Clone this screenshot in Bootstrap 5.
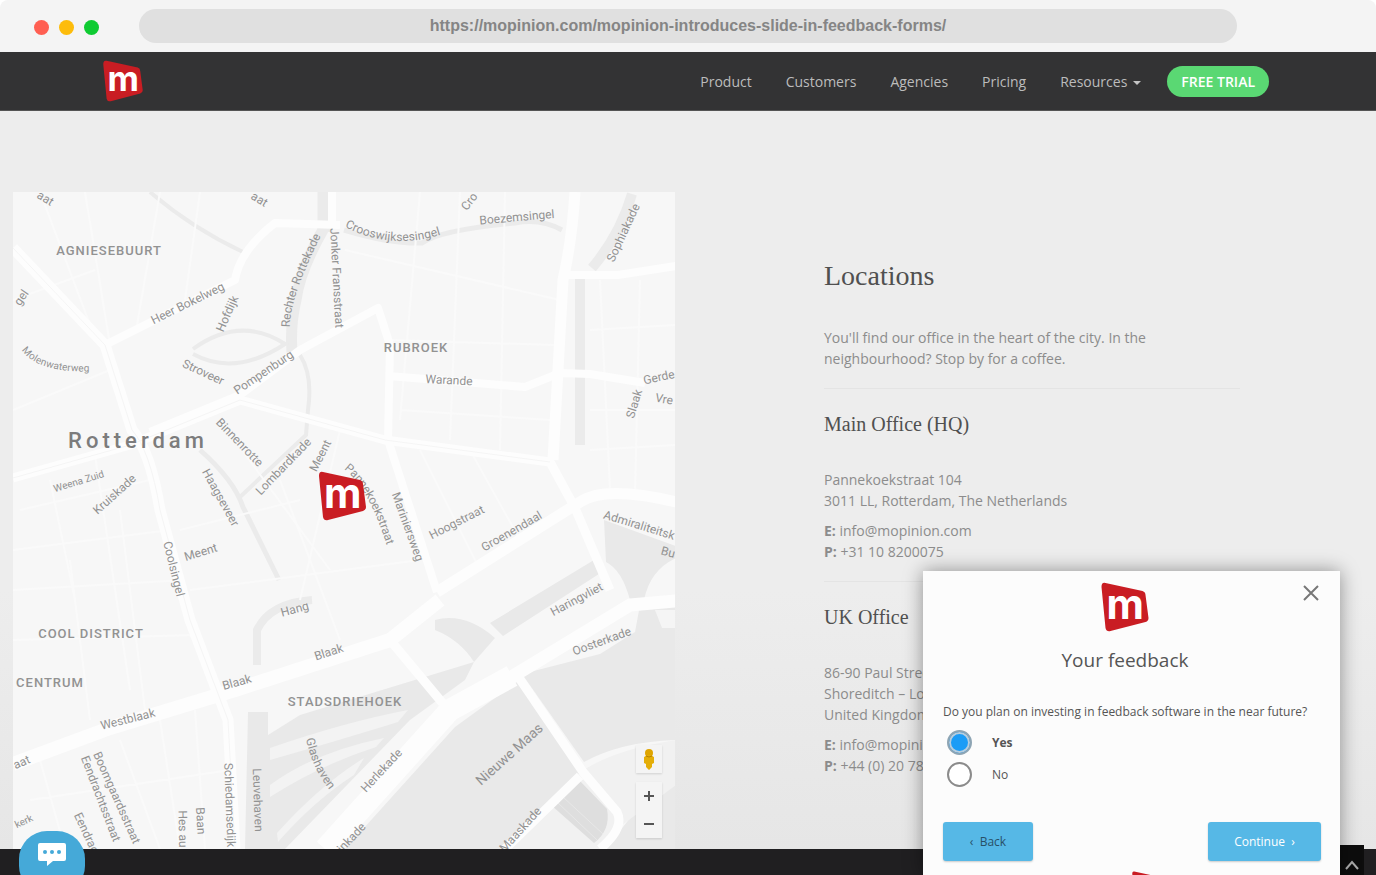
<!DOCTYPE html>
<html lang="en">
<head>
<meta charset="utf-8">
<meta name="viewport" content="width=device-width, initial-scale=1">
<title>Mopinion – Locations</title>
<link href="https://cdn.jsdelivr.net/npm/bootstrap@5.3.0/dist/css/bootstrap.min.css" rel="stylesheet">
<style>
body{font-family:"Open Sans",sans-serif;font-size:14px;line-height:21px;color:#8c8c8c;background:#fff;overflow-x:hidden}
a{color:inherit;text-decoration:none}
.chrome{background:#f4f4f4;height:52px;padding:0 139px 0 34px;border-radius:8px 8px 0 0}
.dot{width:15px;height:15px;border-radius:50%}
.dot-close{background:#ff5f52}.dot-min{background:#fdbc0b}.dot-max{background:#0fcb32}
.dots{gap:10px;width:105px;padding-top:3px}
.address{height:34px;border:0;border-radius:17px;background:#e0e0e0;color:#858585;font:bold 16px "Liberation Sans",sans-serif;text-align:center;min-width:0}
.topnav{background:#333334;min-height:59px;padding:0 107px 0 103px;border-bottom:1px solid #555}
.topnav .nav-link{color:#bcbcbc;padding:0}
.links{gap:34px}
.trial{background:#5ad873;color:#fff;font-weight:600;line-height:19px;border-radius:16px;padding:6px 14px;margin-left:-8px}
.caret{display:inline-block;border:4px solid transparent;border-top-color:#c4c4c4;border-bottom:0;margin-left:6px;vertical-align:2px}
.page-body{background:linear-gradient(#ededed 0 65%,#e6e6e6);padding-top:81px}
.map-col{padding:0 13px}
.city-map{display:block;width:100%;height:657px;background:#f7f7f7}
.city-map text{font-family:Roboto,sans-serif;font-size:12px;fill:#929292;text-anchor:middle;dominant-baseline:middle}
.city-map .area{font-size:13px;font-weight:500;letter-spacing:1px}
.city-map .town{font-size:22px;font-weight:500;letter-spacing:4px;fill:#7c7c7c}
.city-map .along{text-anchor:start}
.city-map .river{font-size:14px}
.city-map .tiny{font-size:10px}
.logo-m,.city-map .logo-m{font:bold 41px Inter,sans-serif;fill:#fff;text-anchor:start;dominant-baseline:auto}
.map-tools{right:13px;bottom:11px;gap:9px}
.map-tools button{display:flex;align-items:center;justify-content:center;width:26px;height:28px;padding:0;border:0;background:#f4f4f4}
.tool-group{box-shadow:0 1px 2px #0002}
.info-col{padding:66px 136px 0}
h1,h2{font-family:"Liberation Serif",serif;color:#505050;margin:0}
h1{font-size:28px;line-height:36px;margin-bottom:33px}
h2{font-size:20px;line-height:30px;margin-bottom:30px}
.info-col p{margin-bottom:9px}
.info-col hr{margin:19px 0 20px;color:#ccc}
.site-foot{background:#201f21;height:26px}
.slide-in{right:36px;bottom:0;width:417px;height:304px;overflow:hidden;background:#fcfcfc;padding:11px 19px 0 20px;color:#555}
.shade{right:36px;bottom:0;width:417px;height:304px;box-shadow:0 0 18px #0006}
.slide-in h3{font-size:19px;font-weight:400;line-height:28px;margin:14px 0 29px;color:#555}
.panel-head{padding-right:14px}
.panel-foot{padding:10px 0 0 24px}
.question{font-size:12px;line-height:18px}
.closer{right:20px;top:13px;padding:0;border:0;background:none;line-height:0}
.option{gap:20px;height:32px;font-size:12px}
.options{padding-top:5px}
.option input{appearance:none;width:25px;height:25px;border:2px solid #8b8b8b;border-radius:50%;margin:0 0 0 4px;background:#fff}
.option input:checked{background:#1b9cf6;border-color:#8ea5b4;box-shadow:inset 0 0 0 2px #b8cddd}
.step{background:#56b8e6;border:0;border-radius:3px;height:39px;font-size:12px;box-shadow:0 1px 2px #0003}
.step-back{width:90px;color:#295066}
.step-next{width:113px;color:#fff}
.chat{left:19px;bottom:-19px;width:66px;height:63px;border:0;border-radius:28px;background:#45a9d8;padding:0 0 15px}
.totop{right:12px;bottom:0;width:24px;height:30px;border:0;background:#0d0d0d;padding:6px 0 0}
</style>
</head>
<body>
<svg width="0" height="0" class="position-absolute" aria-hidden="true"><defs>
<g id="logo"><path d="M4 1 41 9Q44 10 44 13L47 36Q47 39 44 40L9 49Q5 50 4 46L0 5Q0 0 4 1Z" fill="#c91d23"/><text class="logo-m" x="5" y="37">m</text></g>
</defs></svg>

<header class="chrome d-flex align-items-center">
  <div class="dots d-flex flex-shrink-0"><span class="dot dot-close"></span><span class="dot dot-min"></span><span class="dot dot-max"></span></div>
  <input class="address flex-grow-1" type="text" aria-label="Address" value="https://mopinion.com/mopinion-introduces-slide-in-feedback-forms/">
</header>

<nav class="topnav d-flex align-items-center justify-content-between">
  <a href="#" aria-label="Mopinion"><svg width="40" height="42" viewBox="0 0 47 50"><use href="#logo"/></svg></a>
  <div class="links d-flex align-items-center">
    <a class="nav-link" href="#">Product</a><a class="nav-link" href="#">Customers</a><a class="nav-link" href="#">Agencies</a><a class="nav-link" href="#">Pricing</a><a class="nav-link" href="#">Resources<span class="caret"></span></a><a class="trial" href="#">FREE TRIAL</a>
  </div>
</nav>

<main class="page-body">
<div class="row g-0">
  <div class="col-6 map-col"><div class="position-relative">
  <svg class="city-map" viewBox="13 192 662 657" preserveAspectRatio="xMidYMid slice" role="img" aria-label="Map of Rotterdam">
    <!-- water -->
    <g fill="#e9e9e9">
      <path d="M517 682 455 727 345 849H500L582 772ZM522 674 600 654 635 632 640 605 676 605V740Q620 742 584 762ZM676 785 640 806 605 849H676Z"/>
      <path d="M604 520 676 546V558Q650 570 644 600L630 600Q622 570 606 562Z"/>
      <path d="M490 623 594 560 602 572 503 636ZM435 620Q465 612 495 638L474 662Q460 640 435 630Z"/>
      <path d="M248 712H268V735L300 715 474 662 465 680 410 720 285 849 245 849Z"/>
    </g>
    <path d="M655 610H676V628H662Z" fill="#f5f5f5"/>
    <g fill="#f3f3f3"><path d="M270 748Q345 722 408 710L398 722Q340 740 270 760ZM270 785Q315 752 384 738L376 747Q320 765 270 797ZM277 833Q320 785 364 758L354 775Q315 800 278 842Z"/></g>
    <path d="M503 849 578 774Q610 750 676 740V785L622 825 600 849Z" fill="#f1f1f1"/>
    <path d="M551 805 578 779 607 809Q611 830 594 843Z" fill="#dedede"/>
    <path d="m557 802 40 38M563 797l40 37" stroke="#e8e8e8" fill="none"/>
    <g fill="none" stroke="#ebebeb">
      <path stroke-width="15" d="M325 192V232"/><path stroke-width="11" d="M324 228Q300 270 296 300Q290 325 292 352"/>
      <path stroke-width="4" d="M300 355Q313 375 308 410L306 435 240 497M193 349Q240 315 285 344Q235 377 193 354M150 192Q192 228 243 252"/>
      <path stroke-width="5" d="M344 230Q390 244 422 243 440 230 515 223 540 218 562 230M200 450Q234 480 243 507L279 580"/>
      <path stroke-width="10" d="M580 279V445M632 194Q620 235 592 268"/>
      <path stroke-width="8" d="M257 665V630Q270 603 312 600"/>
    </g>
    <!-- minor streets -->
    <g fill="none" stroke="#fafafa" stroke-width="2">
      <path d="M13 300 95 270M40 192 92 330M85 192 110 345M160 192 137 325M200 192 185 300M13 410 110 370M20 510 150 480M50 480 75 600M95 455 130 690M13 550 170 530M13 590 185 580M13 640 195 635M70 560 90 720M120 510 145 710M220 420 330 570M180 530 300 500M190 590 420 560M280 480 340 640M340 430 300 600M345 250 560 300M420 192 400 420M460 192 450 440M505 192 500 450M390 340 555 345M400 410 550 420M420 450 480 570M470 450 520 540M600 280 610 490M640 280 635 495M590 330 676 325M590 410 676 410M590 450 676 445M40 760 65 849M120 740 160 849M160 720 180 849M195 710 205 849M30 800 230 770"/>
    </g>
    <!-- main roads -->
    <g fill="none" stroke="#fdfdfd" stroke-linejoin="round">
      <path stroke-width="11" d="M13 248 105 345 132 430Q150 450 160 510L190 620 228 720 235 849"/>
      <path stroke-width="9" d="M13 478 130 445 240 400 385 440 550 462 575 508 610 590"/>
      <path stroke-width="8" d="M105 345 235 280Q240 250 275 223L340 225M332 192V228M150 432 240 395 300 350 378 308 390 345 388 440 437 592M388 376 525 387 560 373 590 374 645 383M562 275 618 275 676 266"/>
      <path stroke-width="11" d="M575 192Q572 240 563 280L553 460M437 592 580 502Q605 485 676 502"/>
      <path stroke-width="14" d="M13 764 110 728 235 690 390 640 440 600"/>
      <path stroke-width="9" d="M390 640 445 706M505 849 580 776M515 672 583 772 617 812Q625 828 600 849"/>
      <path stroke-width="22" d="M512 676 450 710 325 849"/><path stroke-width="13" d="M676 601 630 605 510 678"/>
    </g>
    <path fill="none" stroke="#f5f5f5" d="M13 248 105 345 132 430Q150 450 160 510L190 620 228 720 235 849M13 478 130 445 240 400 385 440 550 462"/>
    <!-- place names -->
    <text class="area" x="109" y="252">AGNIESEBUURT</text><text class="area" x="416" y="349">RUBROEK</text><text class="area" x="91" y="635">COOL DISTRICT</text><text class="area" x="50" y="684">CENTRUM</text><text class="area" x="345" y="703">STADSDRIEHOEK</text><text class="town" x="138" y="442">Rotterdam</text>
    <!-- street names -->
    <defs>
      <path id="croos" d="M346 224Q395 250 451 228"/><path id="molen" d="M24 348Q40 372 102 368"/><path id="panne" d="M346 467Q373 487 393 555"/><path id="rechter" d="M287 327Q286 298 320 231"/><path id="glas" d="M309 738Q315 770 338 795"/>
    </defs>
    <text class="along"><textPath href="#croos">Crooswijksesingel</textPath></text>
    <text class="along tiny"><textPath href="#molen">Molenwaterweg</textPath></text>
    <text class="along"><textPath href="#panne">Pannekoekstraat</textPath></text>
    <text class="along"><textPath href="#rechter">Rechter Rottekade</textPath></text>
    <text class="along"><textPath href="#glas">Glashaven</textPath></text>
    <text transform="translate(45 199) rotate(32)">aat</text><text transform="translate(259 200) rotate(32)">aat</text>
    <text transform="translate(470 202) rotate(-52)">Cro</text><text transform="translate(517 218) rotate(-5)">Boezemsingel</text>
    <text transform="translate(624 233) rotate(-65)">Sophiakade</text><text transform="translate(336 278) rotate(87)">Jonker Fransstraat</text>
    <text transform="translate(22 298) rotate(-55)">gel</text><text transform="translate(188 304) rotate(-26)">Heer Bokelweg</text>
    <text transform="translate(228 314) rotate(-66)">Hofdijk</text><text transform="translate(203 373) rotate(25)">Stroveer</text>
    <text transform="translate(264 373) rotate(-34)">Pompenburg</text><text transform="translate(449 381) rotate(3)">Warande</text>
    <text transform="translate(659 378) rotate(-12)">Gerde</text><text transform="translate(664 400) rotate(10)">Vre</text><text transform="translate(635 404) rotate(-73)">Slaak</text>
    <text transform="translate(239 443) rotate(46)">Binnenrotte</text><text transform="translate(284 467) rotate(-46)">Lombardkade</text><text transform="translate(321 456) rotate(-63)">Meent</text>
    <text transform="translate(79 482) rotate(-17)" class="tiny">Weena Zuid</text><text transform="translate(115 495) rotate(-42)">Kruiskade</text>
    <text transform="translate(220 498) rotate(61)">Haagseveer</text><text transform="translate(407 527) rotate(70)">Mariniersweg</text>
    <text transform="translate(457 523) rotate(-27)">Hoogstraat</text><text transform="translate(512 532) rotate(-30)">Groenendaal</text>
    <text transform="translate(639 526) rotate(17)">Admiraliteitsk</text><text transform="translate(668 553) rotate(15)">Bu</text>
    <text transform="translate(173 569) rotate(76)">Coolsingel</text><text transform="translate(201 553) rotate(-17)">Meent</text><text transform="translate(295 610) rotate(-15)">Hang</text>
    <text transform="translate(577 600) rotate(-28)">Haringvliet</text><text transform="translate(602 642) rotate(-20)">Oosterkade</text>
    <text transform="translate(329 653) rotate(-18)">Blaak</text><text transform="translate(237 683) rotate(-16)">Blaak</text><text transform="translate(128 720) rotate(-14)">Westblaak</text>
    <text transform="translate(22 763) rotate(-24)">aat</text><text transform="translate(24 822) rotate(-25)" class="tiny">kerk</text>
    <text transform="translate(116 798) rotate(66)">Boomgaardsstraat</text><text transform="translate(100 799) rotate(69)">Eendrachtsstraat</text><text transform="translate(88 838) rotate(65)">Eendracht</text>
    <text transform="translate(229 805) rotate(88)">Schiedamsedijk</text><text transform="translate(257 800) rotate(88)">Leuvehaven</text><text transform="translate(200 821) rotate(87)">Baan</text><text transform="translate(182 829) rotate(89)">Hes au</text>
    <text transform="translate(382 771) rotate(-47)">Herlekade</text><text class="river" transform="translate(510 755) rotate(-42)">Nieuwe Maas</text><text transform="translate(521 830) rotate(-48)">Maaskade</text><text transform="translate(352 838) rotate(-47)">jnkade</text>
    <use href="#logo" transform="translate(319 471)"/>
  </svg>
  <div class="map-tools position-absolute d-flex flex-column">
    <button class="tool-group" aria-label="Street View"><svg width="12" height="22"><circle cx="6" cy="5" r="4" fill="#dfa500"/><path d="M1 9Q6 5 11 9L11 15 9 16V19L6 22 3 19V16L1 15Z" fill="#e4ae08"/><path d="M3 8Q6 10 9 8" stroke="#b88200" fill="none"/></svg></button>
    <div class="tool-group"><button aria-label="Zoom in"><svg width="12" height="12"><path d="M6 1V11M1 6H11" stroke="#555" stroke-width="2"/></svg></button><button aria-label="Zoom out"><svg width="12" height="12"><path d="M1 6H11" stroke="#555" stroke-width="2"/></svg></button></div>
  </div>
  </div></div>
  <section class="col-6 info-col">
    <h1>Locations</h1>
    <p>You'll find our office in the heart of the city. In the neighbourhood? Stop by for a coffee.</p>
    <hr>
    <h2>Main Office (HQ)</h2>
    <p>Pannekoekstraat 104<br>3011 LL, Rotterdam, The Netherlands</p>
    <p><b>E:</b> <a href="#">info@mopinion.com</a><br><b>P:</b> +31 10 8200075</p>
    <hr>
    <h2>UK Office</h2>
    <p>86-90 Paul Street<br>Shoreditch – London<br>United Kingdom</p>
    <p><b>E:</b> <a href="#">info@mopinion.com</a><br><b>P:</b> +44 (0) 20 78</p>
  </section>
</div>
</main>
<footer class="site-foot"></footer>

<button class="totop position-fixed" aria-label="Back to top"><svg width="16" height="12"><path d="M2 10 8 3 14 10" fill="none" stroke="#aaa" stroke-width="2"/></svg></button>
<div class="shade position-fixed"></div>
<form class="slide-in position-fixed">
  <button type="button" class="closer position-absolute" aria-label="Close"><svg width="18" height="18"><path d="M2 2 16 16M16 2 2 16" stroke="#777" stroke-width="2"/></svg></button>
  <div class="panel-head text-center"><svg class="d-block mx-auto" width="48" height="50" viewBox="0 0 47 50"><use href="#logo"/></svg><h3>Your feedback</h3></div>
  <div class="question">Do you plan on investing in feedback software in the near future?</div>
  <div class="options">
    <div class="option d-flex align-items-center"><input type="radio" name="plan" id="yes" checked><label for="yes"><b>Yes</b></label></div>
    <div class="option d-flex align-items-center"><input type="radio" name="plan" id="no"><label for="no">No</label></div>
  </div>
  <div class="d-flex justify-content-between pt-4 mt-2">
    <button type="button" class="step step-back">‹ &nbsp;Back</button>
    <button type="button" class="step step-next">Continue &nbsp;›</button>
  </div>
  <div class="panel-foot"><svg class="d-block mx-auto" width="24" height="25" viewBox="0 0 47 50" aria-hidden="true"><use href="#logo"/></svg></div>
</form>
<button class="chat position-fixed" aria-label="Chat"><svg width="30" height="26"><path d="M3 1H27Q29 1 29 3V17Q29 19 27 19H16L10 24V19H3Q1 19 1 17V3Q1 1 3 1Z" fill="#fff"/><g fill="#45a9d8"><circle cx="8" cy="10" r="2"/><circle cx="15" cy="10" r="2"/><circle cx="22" cy="10" r="2"/></g></svg></button>
<script src="https://cdn.jsdelivr.net/npm/bootstrap@5.3.0/dist/js/bootstrap.bundle.min.js"></script>
</body>
</html>
